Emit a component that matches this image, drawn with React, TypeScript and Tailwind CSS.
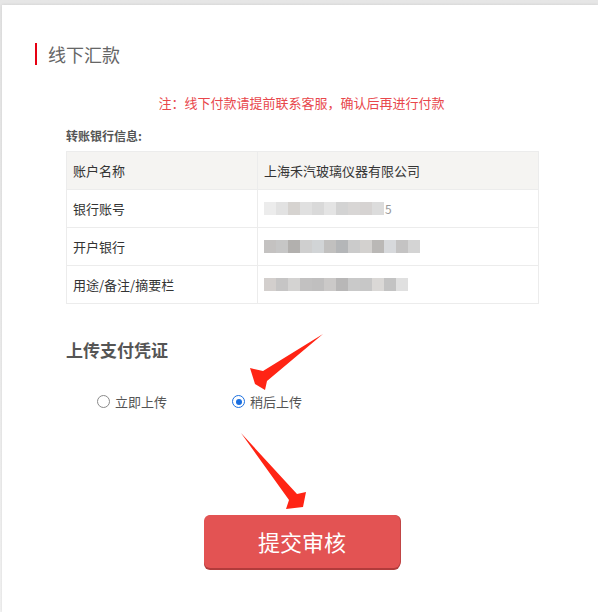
import React from "react";

const rows = [
  { label: "银行账号", blocks: ["bg-[#ececec]", "bg-[#e2e2e2]", "bg-[#d6d3d0]", "bg-[#e0e0e0]", "bg-[#d9d9d9]", "bg-[#e4e4e4]", "bg-[#d3d3d3]", "bg-[#d8d6d5]", "bg-[#d6d3d2]", "bg-[#dcdcdc]"], tail: "5" },
  { label: "开户银行", blocks: ["bg-[#c4c2c1]", "bg-[#c6c6c6]", "bg-[#b2b0ae]", "bg-[#cfcfcf]", "bg-[#d1d4d6]", "bg-[#c1c0bf]", "bg-[#b4b6b8]", "bg-[#cbcbcb]", "bg-[#d3d1cf]", "bg-[#bab8b6]", "bg-[#d7d9dc]", "bg-[#c4c3c3]", "bg-[#d4d4d4]"], tail: "" },
  { label: "用途/备注/摘要栏", blocks: ["bg-[#d3cfcd]", "bg-[#c6c5c5]", "bg-[#d4d3d2]", "bg-[#c2c1c1]", "bg-[#c0bfbf]", "bg-[#cbc9c8]", "bg-[#b8b7b7]", "bg-[#c9c9c9]", "bg-[#c7c7c7]", "bg-[#dad8d6]", "bg-[#c3c3c3]", "bg-[#e0e0e0]"], tail: "" },
];

export default function App() {
  return (
    <div className="relative h-[612px] w-[598px] overflow-hidden bg-gradient-to-b from-[#e6e6e6] to-[#f4f4f4] pl-[2px] pt-[5px] font-['Noto_Sans_CJK_SC',sans-serif]">
      <div className="h-full bg-white shadow-[0_0_3px_rgba(0,0,0,0.12)]">
        {/* header */}
        <div className="flex items-center pl-[33px] pt-[38px]">
          <span className="h-[22px] w-[2px] bg-[#e60012]" />
          <h2 className="ml-[11px] text-[18px] leading-[22px] text-[#666]">线下汇款</h2>
        </div>

        <p className="mt-[29px] pl-[3px] text-center text-[13px] leading-[18px] text-[#e8474c]">
          注：线下付款请提前联系客服，确认后再进行付款
        </p>

        <div className="ml-[64px] mr-[59px] mt-[16px]">
          <div className="text-[12px] font-bold leading-[16px] text-[#555]">转账银行信息:</div>
          <table className="mt-[7px] w-full border-collapse text-[13px] text-[#333]">
            <tbody>
              <tr className="h-[38px] bg-[#f5f4f2]">
                <td className="w-[191px] border border-[#ececec] pl-[6px]">账户名称</td>
                <td className="border border-[#ececec] pl-[6px]">上海禾汽玻璃仪器有限公司</td>
              </tr>
              {rows.map((r) => (
                <tr key={r.label} className="h-[38px]">
                  <td className="border border-[#ececec] pl-[6px]">{r.label}</td>
                  <td className="border border-[#ececec] pl-[6px]">
                    <div className="flex items-center">
                      {r.blocks.map((b, i) => (
                        <span key={i} className={`h-[13px] w-[12px] ${b}`} />
                      ))}
                      {r.tail && <span className="ml-[1px] text-[12px] text-[#999]">{r.tail}</span>}
                    </div>
                  </td>
                </tr>
              ))}
            </tbody>
          </table>
        </div>

        <h3 className="ml-[64px] mt-[35px] text-[17px] font-bold leading-[22px] text-[#555]">上传支付凭证</h3>

        <div className="mt-[31px] flex items-center text-[13px] text-[#555]">
          <label className="ml-[95px] flex items-center gap-[5px]">
            <span className="h-[13px] w-[13px] rounded-full border-[1.5px] border-[#8a8a8a] bg-white" />
            立即上传
          </label>
          <label className="ml-[65px] flex items-center gap-[5px]">
            <span className="flex h-[13px] w-[13px] items-center justify-center rounded-full border-[1.5px] border-[#1a6fe0] bg-white">
              <span className="h-[6px] w-[6px] rounded-full bg-[#1a6fe0]" />
            </span>
            稍后上传
          </label>
        </div>

        <div className="mt-[103px] flex justify-center pl-[4px]">
          <button className="h-[53px] w-[196px] rounded-[6px] bg-[#e35353] text-[22px] text-white shadow-[0_2px_0_#b23b3b,1px_0_0_#c04545]">
            提交审核
          </button>
        </div>
      </div>

      {/* annotation arrows */}
      <svg className="pointer-events-none absolute left-0 top-0" width="598" height="612">
        <polygon points="323,334 263,371 250,368 255,384 265,390 267,381" fill="#ff2414" />
        <polygon points="241,433 297,494 306,492 303,507 286,509 289,500" fill="#ff2414" />
      </svg>
    </div>
  );
}
